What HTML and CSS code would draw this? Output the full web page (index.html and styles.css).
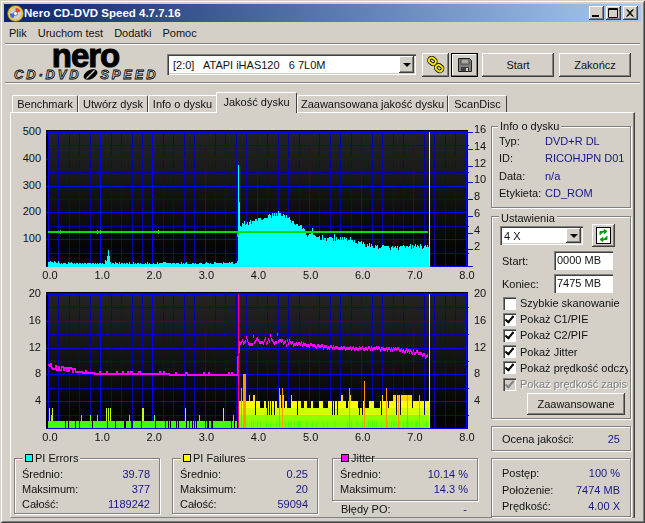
FILE: index.html
```html
<!DOCTYPE html>
<html lang="pl">
<head>
<meta charset="utf-8">
<title>Nero CD-DVD Speed 4.7.7.16</title>
<link rel="stylesheet" href="styles.css">
</head>
<body>
<div class="window">
  <header class="titlebar">
    <svg class="app-icon" width="17" height="17" viewBox="0 0 17 17">
      <circle cx="8.5" cy="8.5" r="8" fill="#e8c840" stroke="#6a5a20" stroke-width=".8"/>
      <circle cx="8.5" cy="8.5" r="5.6" fill="#c8d0e0"/>
      <path d="M8.5 3a5.5 5.500 0 0 1 5 3.2L8.5 8.5z" fill="#f04030"/>
      <path d="M3 8.5a5.5 5.500 0 0 0 3 5L8.5 8.5z" fill="#3068d0"/>
      <circle cx="8.5" cy="8.5" r="2" fill="#fff" stroke="#555" stroke-width=".6"/>
    </svg>
    <span class="title-text">Nero CD-DVD Speed 4.7.7.16</span>
    <div class="win-btns">
      <span class="win-btn"><svg width="15" height="14" viewBox="0 0 15 14"><rect x="3" y="9" width="7" height="2" fill="#000"/></svg></span>
      <span class="win-btn"><svg width="15" height="14" viewBox="0 0 15 14"><path d="M2.5 2.500h9v9h-9z M2.5 3.500h9" fill="none" stroke="#000"/></svg></span>
      <span class="win-btn"><svg width="15" height="14" viewBox="0 0 15 14"><path d="M3.5 3.500l6 7M4.500 3.500l6 7M9.500 3.500l-6 7M10.500 3.500l-6 7" stroke="#000" fill="none"/></svg></span>
    </div>
  </header>
  <nav class="menu">
    <span>Plik</span><span>Uruchom test</span><span>Dodatki</span><span>Pomoc</span>
  </nav>
  <div class="etched"></div>
  <div class="toolbar">
    <div class="logo">
      <div class="logo-nero">nero</div>
      <div class="logo-sub"><span>CD·DVD</span><svg width="15" height="11" viewBox="0 0 15 11"><ellipse cx="7.500" cy="5.500" rx="7.400" ry="4.400" fill="#000" transform="rotate(-28 7.500 5.500)"/><path d="M3.500 9.500L11.500 1.500" stroke="#d4d0c8" stroke-width="1.200"/></svg><span>SPEED</span></div>
    </div>
    <div class="combo combo-drive">
      <span class="combo-text">[2:0]&nbsp;&nbsp; ATAPI iHAS120&nbsp;&nbsp; 6 7L0M</span>
      <span class="combo-arrow"></span>
    </div>
    <button class="btn btn-icon" type="button" aria-label="Opcje">
      <svg width="18" height="18" viewBox="0 0 20 20">
        <g fill="none" stroke="#000" stroke-width="4"><rect x="2" y="2.500" width="8" height="6" rx="3" transform="rotate(40 6 5.500)"/><rect x="9.500" y="10.500" width="8" height="6" rx="3" transform="rotate(40 13.500 13.500)"/></g>
        <g fill="none" stroke="#f4e800" stroke-width="2.200"><rect x="2" y="2.500" width="8" height="6" rx="3" transform="rotate(40 6 5.500)"/><rect x="9.500" y="10.500" width="8" height="6" rx="3" transform="rotate(40 13.500 13.500)"/></g>
      </svg>
    </button>
    <button class="btn btn-icon btn-focus" type="button" aria-label="Zapisz">
      <svg width="16" height="16" viewBox="0 0 16 16">
        <path d="M1.500 1.500h11l2 2v11h-13z" fill="#808080" stroke="#202020"/>
        <rect x="4" y="2" width="8" height="5" fill="#a8a8a8" stroke="#202020" stroke-width=".6"/>
        <rect x="4" y="10" width="8" height="4" fill="#404040"/>
        <rect x="9" y="11" width="2" height="3" fill="#d4d0c8"/>
      </svg>
    </button>
    <button class="btn btn-main btn-start" type="button">Start</button>
    <button class="btn btn-main" type="button">Zakończ</button>
  </div>
  <div class="etched"></div>
  <div class="tabs">
    <span class="tab">Benchmark</span>
    <span class="tab">Utwórz dysk</span>
    <span class="tab">Info o dysku</span>
    <span class="tab tab-active">Jakość dysku</span>
    <span class="tab">Zaawansowana jakość dysku</span>
    <span class="tab">ScanDisc</span>
  </div>
  <main class="panel">
    <section class="left-col">
      <div class="chart-row">
        <div class="axis-l"><span>500</span><span>400</span><span>300</span><span>200</span><span>100</span></div>
        <canvas id="chart-top" class="plot" width="430" height="138"></canvas>
        <div class="axis-r axis-r-fine"><span>16</span><span>14</span><span>12</span><span>10</span><span>8</span><span>6</span><span>4</span><span>2</span></div>
      </div>
      <div class="axis-x"><span>0.0</span><span>1.0</span><span>2.0</span><span>3.0</span><span>4.0</span><span>5.0</span><span>6.0</span><span>7.0</span><span>8.0</span></div>
      <div class="chart-row">
        <div class="axis-l"><span>20</span><span>16</span><span>12</span><span>8</span><span>4</span></div>
        <canvas id="chart-bottom" class="plot" width="430" height="138"></canvas>
        <div class="axis-r"><span>20</span><span>16</span><span>12</span><span>8</span><span>4</span></div>
      </div>
      <div class="axis-x"><span>0.0</span><span>1.0</span><span>2.0</span><span>3.0</span><span>4.0</span><span>5.0</span><span>6.0</span><span>7.0</span><span>8.0</span></div>
      <div class="stats">
        <div class="group stat-group">
          <div class="legend"><i class="swatch swatch-cyan"></i>PI Errors</div>
          <div class="row"><span>Średnio:</span><b>39.78</b></div>
          <div class="row"><span>Maksimum:</span><b>377</b></div>
          <div class="row"><span>Całość:</span><b>1189242</b></div>
        </div>
        <div class="group stat-group">
          <div class="legend"><i class="swatch swatch-yellow"></i>PI Failures</div>
          <div class="row"><span>Średnio:</span><b>0.25</b></div>
          <div class="row"><span>Maksimum:</span><b>20</b></div>
          <div class="row"><span>Całość:</span><b>59094</b></div>
        </div>
        <div class="jitter-col">
          <div class="group stat-group stat-jitter">
            <div class="legend legend-clear"><i class="swatch swatch-pink"></i>Jitter</div>
            <div class="row"><span>Średnio:</span><b>10.14 %</b></div>
            <div class="row"><span>Maksimum:</span><b>14.3 %</b></div>
          </div>
          <div class="row row-po"><span>Błędy PO:</span><b>-</b></div>
        </div>
      </div>
    </section>
    <aside class="right-col">
      <div class="group info-group">
        <div class="legend legend-info">Info o dysku</div>
        <div class="info-row"><span>Typ:</span><b>DVD+R DL</b></div>
        <div class="info-row"><span>ID:</span><b>RICOHJPN D01</b></div>
        <div class="info-row"><span>Data:</span><b>n/a</b></div>
        <div class="info-row"><span>Etykieta:</span><b>CD_ROM</b></div>
      </div>
      <div class="group settings-group">
        <div class="legend legend-settings">Ustawienia</div>
        <div class="speed-row">
          <div class="combo combo-speed"><span class="combo-text">4 X</span><span class="combo-arrow"></span></div>
          <button class="btn btn-refresh" type="button" aria-label="Odśwież">
            <svg width="15" height="17" viewBox="0 0 15 17">
              <rect x=".5" y=".5" width="14" height="16" fill="#fff" stroke="#000"/>
              <path d="M4 8V4.500h4M8 2.500l3 2-3 2z" fill="#00a000" stroke="#00a000"/>
              <path d="M11 9v3.500H7M7 10.500l-3 2 3 2z" fill="#00a000" stroke="#00a000"/>
            </svg>
          </button>
        </div>
        <div class="field"><span>Start:</span><span class="input">0000 MB</span></div>
        <div class="field"><span>Koniec:</span><span class="input">7475 MB</span></div>
        <div class="checks">
          <div class="check"><i class="box"></i><span>Szybkie skanowanie</span></div>
          <div class="check"><i class="box box-on"></i><span>Pokaż C1/PIE</span></div>
          <div class="check"><i class="box box-on"></i><span>Pokaż C2/PIF</span></div>
          <div class="check"><i class="box box-on"></i><span>Pokaż Jitter</span></div>
          <div class="check"><i class="box box-on"></i><span>Pokaż prędkość odczytu</span></div>
          <div class="check check-off"><i class="box box-on"></i><span>Pokaż prędkość zapisu</span></div>
        </div>
        <div class="adv-row"><button class="btn btn-adv" type="button">Zaawansowane</button></div>
      </div>
      <div class="group quality-group"><div class="row"><span>Ocena jakości:</span><b>25</b></div></div>
      <div class="group progress-group">
        <div class="row"><span>Postęp:</span><b>100 %</b></div>
        <div class="row"><span>Położenie:</span><b>7474 MB</b></div>
        <div class="row"><span>Prędkość:</span><b>4.00 X</b></div>
      </div>
    </aside>
  </main>
</div>
<script src="chart.js"></script>
</body>
</html>
```
FILE: styles.css
```css
* { box-sizing: border-box; }
html, body { margin: 0; padding: 0; }
body {
  width: 645px; height: 523px; overflow: hidden;
  background: #d4d0c8; color: #111;
  font: 11px/14px "Liberation Sans", Arial, sans-serif;
}
.window {
  width: 645px; height: 523px; padding: 4px;
  background: #d4d0c8;
  box-shadow: inset 1px 1px #d4d0c8, inset -1px -1px #404040, inset 2px 2px #fff, inset -2px -2px #808080;
}
.titlebar {
  height: 18px; display: flex; align-items: center; padding-left: 3px;
  background: linear-gradient(90deg, #0a246a, #a6caf0);
  color: #fff;
}
.app-icon { flex: none; }
.title-text { font-weight: bold; font-size: 11.5px; }
.win-btns { margin-left: auto; margin-right: 3px; display: flex; gap: 2px; }
.win-btn {
  width: 15px; height: 14px; background: #d4d0c8; display: block;
  box-shadow: inset -1px -1px #404040, inset 1px 1px #fff, inset -2px -2px #808080;
}
.win-btn svg { display: block; }
.menu { height: 20px; margin-top: 1px; display: flex; align-items: center; padding-left: 5px; gap: 11px; }
.etched { height: 2px; background: #808080; border-bottom: 1px solid #fff; margin: 0 1px; }
.toolbar { height: 37px; display: flex; align-items: flex-start; padding-left: 10px; }
.logo { width: 149px; margin-right: 4px; flex: none; text-align: center; }
.logo-nero {
  font: bold 33px/22px "Liberation Sans", Arial, sans-serif; color: #000;
  letter-spacing: -1px; height: 23px; -webkit-text-stroke: 1px #000;
  padding-right: 6px;
}
.logo-sub {
  display: flex; justify-content: flex-start; align-items: center; gap: 2px;
  font: italic bold 13px/13px "Liberation Sans", Arial, sans-serif; white-space: nowrap;
  color: #d4d0c8; -webkit-text-stroke: .8px #000; letter-spacing: 2.8px;
}
.combo {
  display: flex; align-items: center; background: #fff; flex: none;
  box-shadow: inset 1px 1px #808080, inset 2px 2px #404040, inset -1px -1px #fff, inset -2px -2px #d4d0c8;
}
.combo-text { flex: 1; padding-left: 6px; white-space: pre; }
.combo-arrow {
  width: 15px; align-self: stretch; margin: 2px; flex: none; background: #d4d0c8;
  box-shadow: inset -1px -1px #404040, inset 1px 1px #fff, inset -2px -2px #808080;
  display: flex; align-items: center; justify-content: center;
}
.combo-arrow::after {
  content: ""; border: 4px solid transparent; border-top-color: #000; border-bottom-width: 0;
}
.combo-drive { width: 249px; height: 21px; margin-top: 9px; margin-right: 6px; }
.btn {
  border: 0; padding: 0; margin: 0; background: #d4d0c8; color: #111;
  font: 11px/14px "Liberation Sans", Arial, sans-serif;
  box-shadow: inset -1px -1px #404040, inset 1px 1px #fff, inset -2px -2px #808080;
  display: flex; align-items: center; justify-content: center; flex: none;
}
.btn-icon { width: 27px; height: 24px; margin-top: 8px; margin-right: 2px; }
.btn-focus { box-shadow: inset 0 0 0 1px #000, inset -2px -2px #808080, inset 2px 2px #fff; }
.btn-main { width: 72px; height: 24px; margin-top: 8px; margin-right: 5px; }
.btn-start { margin-left: 2px; }
.tabs {
  margin-top: 8px; padding-left: 8px; height: 20px;
  display: grid; grid-template-columns: 66px 70px 69px 80px 151px 59px; justify-content: start; align-items: end;
  position: relative; z-index: 1;
}
.tab {
  height: 17px; text-align: center; line-height: 17px; white-space: nowrap;
  border-left: 1px solid #fff; border-top: 1px solid #fff; border-right: 1px solid #404040;
  border-radius: 2px 2px 0 0; background: #d4d0c8;
}
.tab-active { height: 21px; margin-bottom: -1px; margin-left: -1px; line-height: 18px; }
.panel {
  margin: 0 6px; height: 406px; display: flex;
  border-left: 1px solid #fff; border-top: 1px solid #fff; border-right: 1px solid #404040;
  box-shadow: inset -1px 0 #808080;
  border-bottom: 1px solid #808080;
}
.left-col { width: 480px; flex: none; padding-top: 17px; }
.chart-row { display: flex; height: 138px; }
.plot { display: block; width: 430px; height: 138px; flex: none; }
.axis-l { width: 33px; margin-top: -6px; padding-right: 3px; display: flex; flex-direction: column; text-align: right; flex: none; }
.axis-l span { height: 26.8px; flex: none; }
.axis-r { margin-top: -6px; display: flex; flex-direction: column; flex: none; }
.axis-r span { height: 26.8px; flex: none; }
.axis-r-fine { margin-top: -8px; }
.axis-r-fine span { height: 16.75px; }
.axis-x { height: 24px; width: 441px; margin-left: 27px; display: flex; justify-content: space-between; }
.axis-x span { width: 24px; text-align: center; }
.stats { display: flex; padding-left: 3px; margin-top: 4px; }
.group {
  border: 1px solid #808080;
  box-shadow: inset 1px 1px #fff, 1px 1px #fff;
  flex: none;
}
.stat-group { width: 146px; height: 56px; margin-right: 12px; padding: 0 9px 0 7px; }
.legend {
  display: flex; align-items: center; width: max-content; height: 14px;
  margin-top: -8px; margin-bottom: 2px; margin-left: 1px; padding: 0 2px; background: #d4d0c8;
}
.legend-clear { background: transparent; margin-left: -1px; }
.legend-info { margin-left: -1px; margin-bottom: 0; }
.legend-settings { margin: -6px 0 -1px 7px; }
.swatch { width: 8px; height: 8px; border: 1px solid #000; margin-right: 2px; flex: none; display: block; }
.swatch-cyan { background: #00ffff; }
.swatch-yellow { background: #ffff00; }
.swatch-pink { background: #ff00ff; }
.row { display: flex; justify-content: space-between; height: 15px; line-height: 15px; white-space: nowrap; }
.row b, .info-row b { font-weight: normal; color: #16168a; }
.jitter-col { width: 146px; margin-left: 2px; flex: none; }
.stat-jitter { height: 43px; margin: 0; }
.row-po { padding: 0 11px 0 9px; margin-top: 1px; }
.right-col { width: 140px; flex: none; padding-top: 13px; display: flex; flex-direction: column; }
.info-group { height: 82px; padding-left: 7px; }
.info-row { display: flex; height: 17.4px; line-height: 17px; white-space: nowrap; }
.info-row span { width: 46px; flex: none; }
.settings-group { height: 203px; margin-top: 8px; }
.speed-row { display: flex; align-items: center; height: 23px; padding-left: 8px; }
.combo-speed { width: 83px; height: 19px; margin-right: 9px; }
.combo-speed .combo-text { padding-left: 4px; }
.btn-refresh { width: 23px; height: 23px; }
.field { display: flex; align-items: center; height: 19px; margin-top: 4px; padding-left: 10px; }
.field > span:first-child { width: 52px; flex: none; }
.input {
  width: 59px; height: 19px; padding-left: 3px; line-height: 19px; background: #fff; flex: none;
  box-shadow: inset 1px 1px #808080, inset 2px 2px #404040, inset -1px -1px #fff;
}
.checks { margin-top: 2px; padding-left: 11px; }
.check { display: flex; align-items: center; height: 16.2px; white-space: nowrap; overflow: hidden; width: 125px; }
.box {
  width: 13px; height: 13px; margin-right: 4px; flex: none; display: flex; align-items: center; justify-content: center;
  background: #fff; box-shadow: inset 1px 1px #808080, inset 2px 2px #404040, inset -1px -1px #fff;
}
.box-on::after {
  content: ""; width: 3px; height: 7px; margin-top: -2px;
  border: solid #000; border-width: 0 2px 2px 0; transform: rotate(40deg);
}
.check-off .box { background: #d4d0c8; }
.check-off .box-on::after { border-color: #808080; }
.check-off span { color: #808080; text-shadow: 1px 1px #fff; }
.adv-row { display: flex; justify-content: flex-end; padding-right: 5px; margin-top: 1px; }
.btn-adv { width: 98px; height: 22px; }
.quality-group { height: 25px; margin-top: 7px; padding: 5px 10px 0 10px; }
.progress-group { height: 59px; margin-top: 7px; padding: 7px 10px 0 10px; }
.progress-group .row { height: 16.5px; }
```
FILE: chart.js
```js
(function () {
  var seed = 12345;
  function rnd() { seed = (seed * 1664525 + 1013904223) >>> 0; return seed / 4294967296; }
  function lerp(points, x) {
    for (var i = 1; i < points.length; i++) {
      if (x <= points[i][0]) {
        var a = points[i - 1], b = points[i];
        return a[1] + (b[1] - a[1]) * (x - a[0]) / (b[0] - a[0]);
      }
    }
    return points[points.length - 1][1];
  }
  function frame(ctx, top) {
    var y0 = top + 2;
    ctx.setTransform(1, 0, 0, 1, -44, -top);
    ctx.fillStyle = '#000';
    ctx.fillRect(46, top, 422, 137);
    var g = ctx.createLinearGradient(0, y0, 0, y0 + 134);
    g.addColorStop(0, '#242424');
    g.addColorStop(1, '#000');
    ctx.fillStyle = g;
    ctx.fillRect(48, y0, 419, 134);
    var k;
    for (k = 0; k <= 40; k++) {
      ctx.fillStyle = k % 5 === 0 ? '#0000ff' : '#0000b4';
      ctx.fillRect(Math.round(48 + 10.44 * k), y0, 1, 134);
    }
    for (k = 0; k <= 10; k++) {
      ctx.fillStyle = k % 2 === 0 ? '#0000ff' : '#0000b4';
      ctx.fillRect(k % 2 === 0 ? 46 : 48, Math.round(y0 + 13.4 * k), 421, 1);
    }
    ctx.fillStyle = '#0000ff';
    ctx.fillRect(48, top + 1, 419, 2);
  }
  function marker(ctx, top) {
    ctx.fillStyle = '#e4e4e4';
    ctx.fillRect(429, top + 2, 1, 134);
  }

  function drawTop() {
    var ctx = document.getElementById('chart-top').getContext('2d');
    var top = 129, base = 265, x, h;
    frame(ctx, top);
    ctx.fillStyle = '#0000ff';
    for (var t = 0; t <= 8; t++) ctx.fillRect(467, Math.round(131 + 16.75 * t), 6, 1);
    var env = [[240, 38], [243, 42], [263, 48], [280, 53], [290, 46], [302, 38], [307, 31], [330, 27], [347, 27], [370, 20], [397, 18], [417, 20], [430, 18]];
    ctx.fillStyle = '#00ffff';
    for (x = 48; x < 238; x++) {
      h = 2 + Math.floor(rnd() * 2.2);
      if (rnd() < 0.06) h += 1;
      if (x < 60) h += 1;
      ctx.fillRect(x, base - h, 1, h + 1);
    }
    [[105, 6], [106, 5], [107, 10], [108, 16], [109, 10], [110, 4]].forEach(function (s) {
      ctx.fillRect(s[0], base - s[1], 1, s[1]);
    });
    ctx.fillRect(238, 164, 1, 102);
    ctx.fillRect(239, 201, 1, 65);
    for (x = 240; x <= 429; x++) {
      h = Math.round(lerp(env, x) + rnd() * 5 - 2.5);
      if (x === 312) h = 38;
      if (x === 334) h = 32;
      ctx.fillRect(x, base - h, 1, h + 1);
    }
    ctx.fillStyle = '#00e000';
    ctx.fillRect(48, 230, 380, 2);
    [60, 97, 100, 158].forEach(function (p) { ctx.fillRect(p, 229, 1, 4); });
    ctx.fillRect(237, 230, 1, 6);
    ctx.fillRect(238, 230, 1, 4);
    marker(ctx, top);
  }

  function drawBottom() {
    var ctx = document.getElementById('chart-bottom').getContext('2d');
    var top = 291, base = 427, u = 6.7, x, i;
    frame(ctx, top);
    function bar(px, level, color) {
      var y = Math.round(base - level * u);
      ctx.fillStyle = color;
      ctx.fillRect(px, y, 1, base - y);
    }
    for (x = 48; x < 237; x++) {
      var r = rnd();
      if (r > 0.2 || x < 64) bar(x, 1, '#44ff00');
      if (r > 0.93) { bar(x, 2, '#70ff00'); bar(x, 1, '#44ff00'); }
      if (r > 0.98) { bar(x, 3, '#c0ff20'); bar(x, 1, '#44ff00'); }
    }
    [49, 106, 108, 110, 142].forEach(function (p) { bar(p, 3, '#c0ff20'); bar(p, 1, '#44ff00'); });
    var layers = ['#7cff00', '#8cff00', '#d4ff00', '#ffff00', '#ffd800'];
    var run = 0, runLevel = 4;
    for (x = 238; x <= 429; x++) {
      if (run-- <= 0) {
        run = Math.floor(rnd() * 5);
        runLevel = rnd() > 0.3 ? 4 : 3;
        if (x > 392 && x < 412) runLevel = 5;
      }
      var level = runLevel;
      var q = rnd();
      if (q > 0.94) level = 5;
      if (q < 0.04) level = 2;
      for (i = level; i >= 1; i--) bar(x, i, layers[i - 1]);
      if (rnd() > 0.72) bar(x, 1, '#50ff00');
    }
    [[243, 8], [244, 8], [245, 8], [241, 6], [279, 6], [282, 6], [349, 6], [364, 7], [386, 6], [398, 5], [407, 5], [419, 5]].forEach(function (s) {
      bar(s[0], s[1], '#ff9800');
    });
    var before = [[48, 363], [52, 367], [75, 370], [100, 372], [237, 373]];
    var after = [[240, 340], [270, 339], [300, 341], [320, 344], [345, 346], [370, 346], [395, 347], [415, 350], [427, 354]];
    ctx.fillStyle = '#ff00ff';
    var prev = null;
    for (x = 48; x <= 237; x++) {
      var y = Math.round(lerp(before, x) + (rnd() < 0.12 ? -2 : 0) + (x < 75 && rnd() < 0.35 ? -3 : 0));
      var yTop = prev === null ? y : Math.min(y, prev);
      var yEnd = prev === null ? y : Math.max(y, prev);
      ctx.fillRect(x, yTop, 1, yEnd - yTop + 2);
      prev = y;
    }
    ctx.fillRect(237, 355, 1, 18);
    for (x = 240; x <= 427; x++) {
      var noise = x < 295 ? rnd() * 6 - 3 : rnd() * 3 - 1.5;
      if (x < 290 && rnd() < 0.12) noise -= 6;
      ctx.fillRect(x, Math.round(lerp(after, x) + noise), 1, 3);
    }
    ctx.fillRect(239, 340, 1, 12);
    ctx.fillStyle = '#ff0070';
    ctx.fillRect(238, 293, 1, 134);
    marker(ctx, top);
  }
  drawTop();
  drawBottom();
})();
```
